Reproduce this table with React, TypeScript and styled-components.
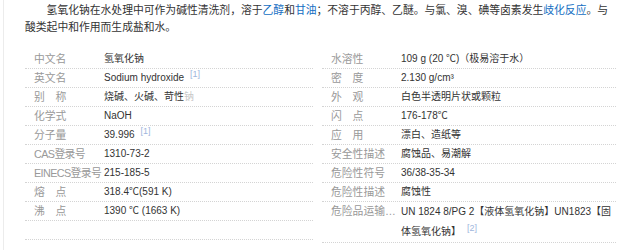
import styled, { createGlobalStyle } from "styled-components";

const GlobalStyle = createGlobalStyle`
  body {
    margin: 0;
    background: #fff;
    font-family: "Liberation Sans", Arial, "Noto Sans CJK SC", sans-serif;
    font-size: 10.8px;
    color: #333;
  }
`;

const Page = styled.div`
  margin-left: 3px;
  height: 250px;
  box-sizing: border-box;
  border-left: 1px solid #ececec;
  padding: 2px 5px 0 21px;
  overflow: hidden;
`;

const Para = styled.p`
  margin: 0;
  text-indent: 2em;
  line-height: 16.5px;
  color: #333;
  a {
    color: #136ec2;
    text-decoration: none;
  }
`;

const InfoTable = styled.div`
  display: flex;
  gap: 9px;
  margin-top: 15px;
`;

const Column = styled.dl<{ $width: number }>`
  margin: 0;
  width: ${(p) => p.$width}px;
  flex-shrink: 0;
`;

const Row = styled.div`
  display: flex;
  border-bottom: 1px dotted #d4d4d4;
  min-height: 18px;
  line-height: 18px;
`;

const Label = styled.dt<{ $tight?: boolean }>`
  width: 70px;
  padding-left: 9px;
  flex-shrink: 0;
  color: #999;
  font-size: 10.8px;
  letter-spacing: ${(p) => (p.$tight ? "-0.6px" : "0")};
  white-space: nowrap;
  overflow: hidden;
  text-overflow: ellipsis;
`;

const Value = styled.dd<{ $tall?: boolean }>`
  margin: 0;
  flex: 1;
  color: #333;
  font-size: 10px;
  line-height: ${(p) => (p.$tall ? "20px" : "18px")};
  sup {
    font-size: 9px;
    line-height: 0;
    color: #9fb6dd;
    margin-left: 6px;
  }
`;

const Faded = styled.span`
  color: #c8c8c8;
`;

interface Item {
  label: string;
  value: React.ReactNode;
  tall?: boolean;
  tight?: boolean;
}

const leftItems: Item[] = [
  { label: "中文名", value: "氢氧化钠" },
  { label: "英文名", value: <>Sodium hydroxide<sup>[1]</sup></> },
  { label: "别　称", value: <>烧碱、火碱、苛性<Faded>钠</Faded></> },
  { label: "化学式", value: "NaOH" },
  { label: "分子量", value: <>39.996<sup>[1]</sup></> },
  { label: "CAS登录号", value: "1310-73-2", tight: true },
  { label: "EINECS登录号", value: "215-185-5", tight: true },
  { label: "熔　点", value: "318.4℃(591 K)" },
  { label: "沸　点", value: "1390 ℃ (1663 K)" },
  { label: "", value: "" },
];

const rightItems: Item[] = [
  { label: "水溶性", value: "109 g (20 ℃)（极易溶于水）" },
  { label: "密　度", value: "2.130 g/cm³" },
  { label: "外　观", value: "白色半透明片状或颗粒" },
  { label: "闪　点", value: "176-178℃" },
  { label: "应　用", value: "漂白、造纸等" },
  { label: "安全性描述", value: "腐蚀品、易潮解" },
  { label: "危险性符号", value: "36/38-35-34" },
  { label: "危险性描述", value: "腐蚀性" },
  {
    label: "危险品运输编号",
    value: <>UN 1824 8/PG 2【液体氢氧化钠】UN1823【固体氢氧化钠】<sup>[2]</sup></>,
    tall: true,
  },
];

const InfoColumn = ({ items, width }: { items: Item[]; width: number }) => (
  <Column $width={width}>
    {items.map((item, i) => (
      <Row key={i}>
        <Label $tight={item.tight}>{item.label}</Label>
        <Value $tall={item.tall}>{item.value}</Value>
      </Row>
    ))}
  </Column>
);

const App = () => {
  return (
    <>
      <GlobalStyle />
      <Page>
        <Para>
          氢氧化钠在水处理中可作为碱性清洗剂，溶于<a href="#">乙醇</a>和
          <a href="#">甘油</a>；不溶于丙醇、乙醚。与氯、溴、碘等卤素发生
          <a href="#">歧化反应</a>。与酸类起中和作用而生成盐和水。
        </Para>
        <InfoTable>
          <InfoColumn items={leftItems} width={288} />
          <InfoColumn items={rightItems} width={294} />
        </InfoTable>
      </Page>
    </>
  );
};

export default App;
